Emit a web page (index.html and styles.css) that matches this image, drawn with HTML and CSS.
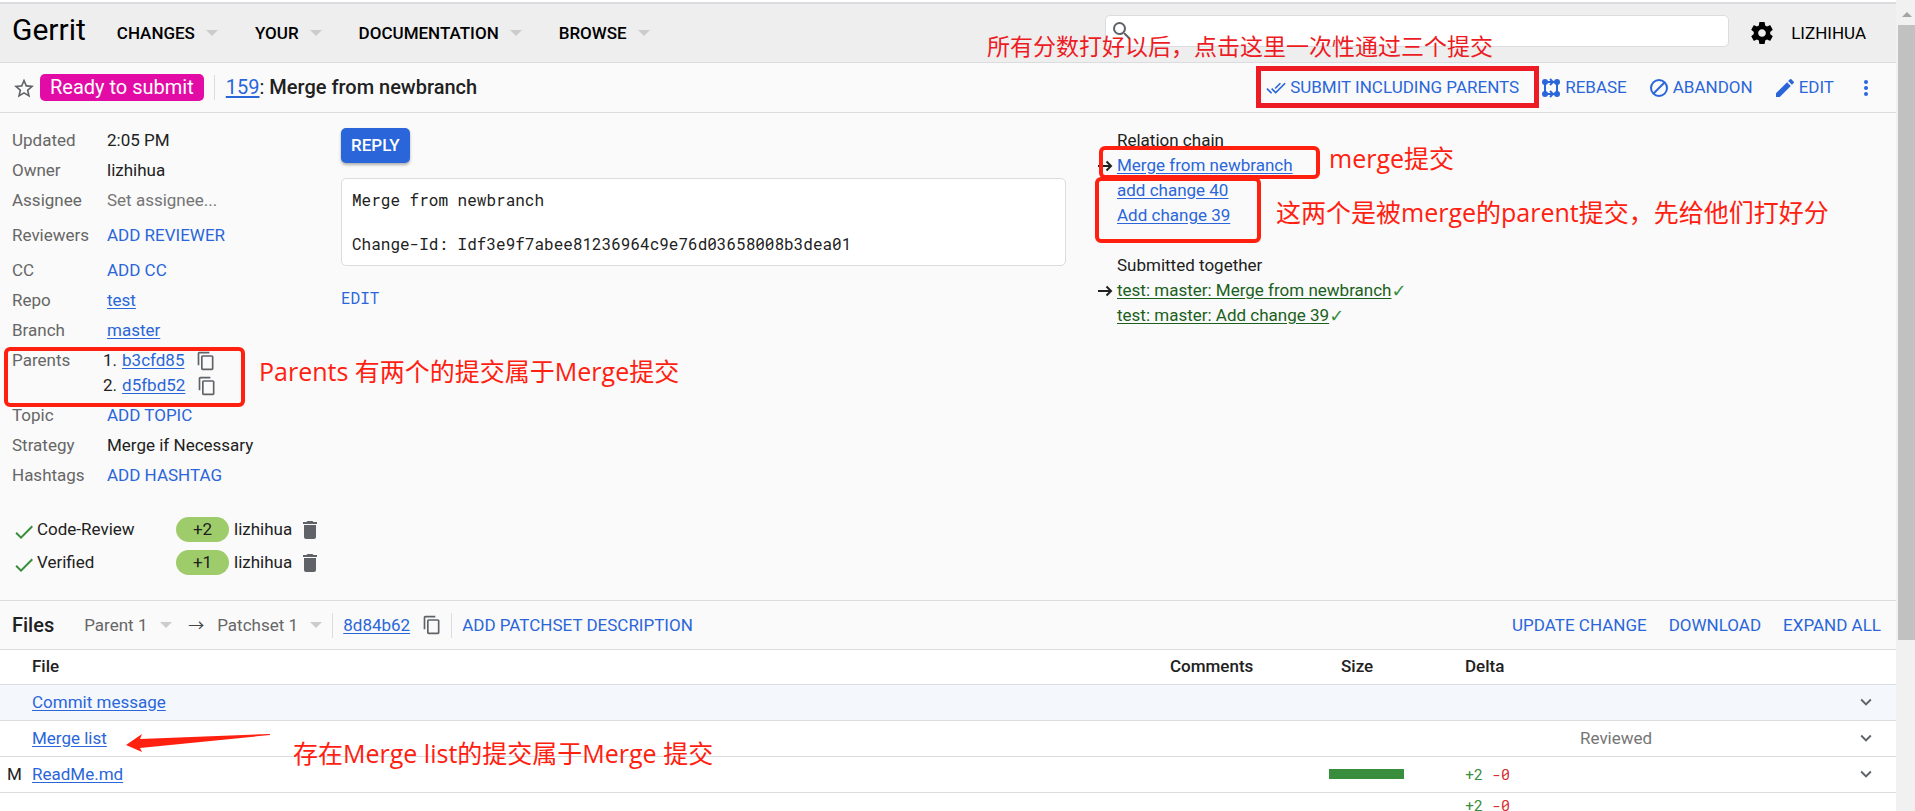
FILE: index.html
```
<!DOCTYPE html>
<html lang="en">
<head>
<meta charset="utf-8">
<title>159: Merge from newbranch · Gerrit</title>
<link rel="stylesheet" href="styles.css">
</head>
<body>
<svg class="sprite" aria-hidden="true">
  <symbol id="copy" viewBox="0 0 24 24"><path d="M16 1H4c-1.100 0-2 .9-2 2v14h2V3h12V1zm3 4H8c-1.100 0-2 .9-2 2v14c0 1.100.9 2 2 2h11c1.100 0 2-.9 2-2V7c0-1.100-.9-2-2-2zm0 16H8V7h11v14z"/></symbol>
  <symbol id="trash" viewBox="0 0 24 24"><path d="M6 19c0 1.100.9 2 2 2h8c1.100 0 2-.9 2-2V7H6v12zM19 4h-3.500l-1-1h-5l-1 1H5v2h14V4z"/></symbol>
  <symbol id="check" viewBox="0 0 24 24"><path d="M9 16.170L4.830 12l-1.420 1.410L9 19 21 7l-1.410-1.410z"/></symbol>
  <symbol id="chevron" viewBox="0 0 24 24"><path d="M7.410 8.590L12 13.170l4.590-4.580L18 10l-6 6-6-6z"/></symbol>
  <symbol id="caret" viewBox="0 0 12 6"><path d="M0 0h12L6 6z"/></symbol>
  <symbol id="arrow" viewBox="0 0 16 12"><path d="M1 6h13M9.500 1.500L14 6l-4.500 4.500" fill="none" stroke="currentColor" stroke-width="2"/></symbol>
</svg>
<div class="window">
<div class="page">
  <header class="topbar">
    <a class="brand" href="#">Gerrit</a>
    <nav class="menus">
      <button class="menu">CHANGES<svg class="caret"><use href="#caret"/></svg></button>
      <button class="menu">YOUR<svg class="caret"><use href="#caret"/></svg></button>
      <button class="menu">DOCUMENTATION<svg class="caret"><use href="#caret"/></svg></button>
      <button class="menu">BROWSE<svg class="caret"><use href="#caret"/></svg></button>
    </nav>
    <div class="search">
      <svg class="search-icon" viewBox="0 0 24 24"><path d="M15.500 14h-.79l-.28-.27A6.470 6.470 0 0 0 16 9.500 6.500 6.500 0 1 0 9.500 16c1.610 0 3.090-.59 4.230-1.570l.27.28v.79l5 4.990L20.490 19l-4.990-5zm-6 0C7.010 14 5 11.990 5 9.500S7.010 5 9.500 5 14 7.010 14 9.500 11.990 14 9.500 14z"/></svg>
      <input type="text" aria-label="Search">
    </div>
    <button class="gear" aria-label="Settings"><svg viewBox="2 2 20 20"><path d="M19.430 12.980c.04-.32.070-.64.070-.98s-.03-.66-.07-.98l2.110-1.650c.19-.15.240-.42.120-.64l-2-3.460c-.12-.22-.39-.3-.61-.22l-2.490 1c-.52-.4-1.080-.73-1.690-.98l-.38-2.650A.488.488 0 0 0 14 2h-4c-.25 0-.46.180-.49.420l-.38 2.650c-.61.250-1.170.59-1.690.98l-2.490-1c-.23-.09-.49 0-.61.220l-2 3.460c-.13.220-.07.490.120.640l2.110 1.650c-.04.320-.07.650-.07.980s.03.660.070.980l-2.110 1.650c-.19.150-.24.420-.12.640l2 3.460c.12.220.390.300.610.220l2.490-1c.52.400 1.080.730 1.690.980l.38 2.650c.03.240.240.420.490.420h4c.25 0 .46-.18.490-.42l.38-2.650c.61-.25 1.170-.59 1.690-.98l2.490 1c.23.090.490 0 .610-.22l2-3.460c.12-.22.070-.49-.12-.64l-2.110-1.650zM12 15.500c-1.930 0-3.500-1.570-3.500-3.500s1.570-3.500 3.500-3.500 3.500 1.570 3.500 3.500-1.570 3.500-3.500 3.500z"/></svg></button>
    <a class="account" href="#">LIZHIHUA</a>
    <p class="note note-submit">所有分数打好以后，点击这里一次性通过三个提交</p>
  </header>

  <section class="titlebar">
    <button class="star" aria-label="Star change"><svg viewBox="2 2 20 19"><path d="M22 9.240l-7.190-.62L12 2 9.190 8.630 2 9.240l5.460 4.730L5.820 21 12 17.270 18.180 21l-1.630-7.030L22 9.240zM12 15.400l-3.760 2.270 1-4.280-3.320-2.880 4.380-.38L12 6.100l1.710 4.040 4.380.38-3.320 2.880 1 4.280L12 15.400z"/></svg></button>
    <span class="status">Ready to submit</span>
    <h1 class="subject"><a href="#">159</a>: <b>Merge from newbranch</b></h1>
    <div class="actions">
      <button class="action submit"><svg viewBox="0 0 24 24"><path d="M18 7l-1.410-1.410-6.340 6.340 1.410 1.410L18 7zm4.240-1.410L11.660 16.170 7.480 12l-1.410 1.410L11.660 19l12-12-1.420-1.410zM.41 13.410L6 19l1.410-1.410L1.830 12 .41 13.410z"/></svg>SUBMIT INCLUDING PARENTS</button>
      <button class="action"><svg viewBox="0 0 20 20"><g fill="none" stroke="currentColor" stroke-width="2"><path d="M4 4v12M16 4v12M4 4h7M4 16h7M9 1l3 3-3 3M9 13l3 3-3 3M12 4h4M12 16h4"/></g><circle cx="4" cy="4" r="3"/><circle cx="16" cy="4" r="3"/><circle cx="4" cy="16" r="3"/><circle cx="16" cy="16" r="3"/></svg>REBASE</button>
      <button class="action"><svg viewBox="0 0 20 20"><g fill="none" stroke="currentColor" stroke-width="2"><circle cx="10" cy="10" r="8"/><path d="M4.500 15.500l11-11"/></g></svg>ABANDON</button>
      <button class="action"><svg viewBox="2 2 20 20"><path d="M3 17.250V21h3.750L17.810 9.940l-3.750-3.750L3 17.250zM20.710 7.040a.996.996 0 0 0 0-1.410l-2.340-2.340a.996.996 0 0 0-1.410 0l-1.830 1.830 3.750 3.750 1.830-1.830z"/></svg>EDIT</button>
      <button class="action more" aria-label="More actions"><svg viewBox="0 0 20 20"><circle cx="10" cy="4" r="2"/><circle cx="10" cy="10" r="2"/><circle cx="10" cy="16" r="2"/></svg></button>
    </div>
  </section>

  <main class="info">
    <section class="meta">
      <dl class="fields">
        <dt>Updated</dt><dd>2:05 PM</dd>
        <dt>Owner</dt><dd>lizhihua</dd>
        <dt>Assignee</dt><dd class="muted">Set assignee...</dd>
        <dt class="roomy">Reviewers</dt><dd class="roomy"><button class="link">ADD REVIEWER</button></dd>
        <dt>CC</dt><dd><button class="link">ADD CC</button></dd>
        <dt>Repo</dt><dd><a href="#">test</a></dd>
        <dt>Branch</dt><dd><a href="#">master</a></dd>
        <dt class="parents-label">Parents</dt>
        <dd><ol class="parents">
          <li><a href="#">b3cfd85</a><button class="icon" aria-label="Copy b3cfd85"><svg><use href="#copy"/></svg></button></li>
          <li><a href="#">d5fbd52</a><button class="icon" aria-label="Copy d5fbd52"><svg><use href="#copy"/></svg></button></li>
        </ol></dd>
        <dt>Topic</dt><dd><button class="link">ADD TOPIC</button></dd>
        <dt>Strategy</dt><dd>Merge if Necessary</dd>
        <dt>Hashtags</dt><dd><button class="link">ADD HASHTAG</button></dd>
      </dl>
      <ul class="scores">
        <li><svg class="ok"><use href="#check"/></svg><span class="score-name">Code-Review</span><span class="pill">+2</span>lizhihua<button class="icon" aria-label="Delete vote"><svg><use href="#trash"/></svg></button></li>
        <li><svg class="ok"><use href="#check"/></svg><span class="score-name">Verified</span><span class="pill">+1</span>lizhihua<button class="icon" aria-label="Delete vote"><svg><use href="#trash"/></svg></button></li>
      </ul>
      <div class="frame frame-parents"></div>
      <p class="note note-parents">Parents 有两个的提交属于Merge提交</p>
    </section>

    <section class="commit">
      <button class="reply">REPLY</button>
      <pre class="message">Merge from newbranch

Change-Id: Idf3e9f7abee81236964c9e76d03658008b3dea01</pre>
      <button class="link mono">EDIT</button>
    </section>

    <section class="related">
      <h2>Relation chain</h2>
      <ul>
        <li class="current"><svg class="here"><use href="#arrow"/></svg><a href="#">Merge from newbranch</a></li>
        <li><a href="#">add change 40</a></li>
        <li><a href="#">Add change 39</a></li>
      </ul>
      <h2>Submitted together</h2>
      <ul class="together">
        <li class="current"><svg class="here"><use href="#arrow"/></svg><a href="#">test: master: Merge from newbranch</a><span class="tick">✓</span></li>
        <li><a href="#">test: master: Add change 39</a><span class="tick">✓</span></li>
      </ul>
      <div class="frame frame-merge"></div>
      <div class="frame frame-changes"></div>
      <p class="note note-merge">merge提交</p>
      <p class="note note-changes">这两个是被merge的parent提交，先给他们打好分</p>
    </section>
  </main>

  <section class="filesbar">
    <h2>Files</h2>
    <label class="pick"><select aria-label="Base"><option>Parent 1</option></select><svg class="caret"><use href="#caret"/></svg></label>
    <span class="to">→</span>
    <label class="pick"><select aria-label="Patchset"><option>Patchset 1</option></select><svg class="caret"><use href="#caret"/></svg></label>
    <div class="sha"><a href="#">8d84b62</a><button class="icon" aria-label="Copy 8d84b62"><svg><use href="#copy"/></svg></button></div>
    <button class="link">ADD PATCHSET DESCRIPTION</button>
    <div class="filetools">
      <button class="link">UPDATE CHANGE</button>
      <button class="link">DOWNLOAD</button>
      <button class="link">EXPAND ALL</button>
    </div>
  </section>

  <section class="files">
    <table>
      <colgroup><col class="c-status"><col><col class="c-comments"><col class="c-size"><col class="c-delta"><col class="c-reviewed"><col class="c-expand"></colgroup>
      <thead><tr><th></th><th>File</th><th>Comments</th><th class="size-head">Size</th><th>Delta</th><th></th><th></th></tr></thead>
      <tbody>
        <tr class="selected"><td></td><td><a href="#">Commit message</a></td><td></td><td></td><td></td><td></td><td><button class="icon" aria-label="Expand"><svg><use href="#chevron"/></svg></button></td></tr>
        <tr><td></td><td><a href="#">Merge list</a></td><td></td><td></td><td></td><td class="muted">Reviewed</td><td><button class="icon" aria-label="Expand"><svg><use href="#chevron"/></svg></button></td></tr>
        <tr><td>M</td><td><a href="#">ReadMe.md</a></td><td></td><td><div class="bar"></div></td><td class="delta"><span class="add">+2</span> <span class="del">-0</span></td><td></td><td><button class="icon" aria-label="Expand"><svg><use href="#chevron"/></svg></button></td></tr>
      </tbody>
      <tfoot><tr><td></td><td></td><td></td><td></td><td class="delta"><span class="add">+2</span> <span class="del">-0</span></td><td></td><td></td></tr></tfoot>
    </table>
    <svg class="pointer" viewBox="0 0 144 18"><path d="M0 11L16 0l-2 5L144 0v1L14 14l2 4z"/></svg>
    <p class="note note-list">存在Merge list的提交属于Merge 提交</p>
  </section>
</div>
<div class="scroll" aria-hidden="true"><svg viewBox="0 0 10 5"><path d="M0 5h10L5 0z"/></svg><div class="thumb"></div></div>
</div>
</body>
</html>
```
FILE: styles.css
```
* { box-sizing: border-box; }
html, body { height: 100%; }
body {
  margin: 0;
  overflow: hidden;
  background: #fff;
  color: #212121;
  font: 17px/25px Roboto, "Noto Sans CJK SC", sans-serif;
}
h1, h2, p, dl, dd, ul, ol, pre { margin: 0; padding: 0; }
ul { list-style: none; }
a { color: #2a66d9; text-underline-offset: 2px; }
button { margin: 0; padding: 0; border: 0; background: none; color: inherit; font: inherit; cursor: pointer; }
svg { display: block; flex: none; fill: currentColor; }
.sprite { position: absolute; width: 0; height: 0; }
.link { color: #2a66d9; }
.muted { color: #757575; }
.icon { color: #5f6368; }
.icon svg { width: 20px; height: 20px; }
.caret { width: 12px; height: 6px; color: #ccc; }

.window { display: flex; height: 100%; }
.page { flex: 1; min-width: 0; overflow: hidden; border-top: 2px solid #fff; }

.topbar {
  position: relative;
  display: flex;
  align-items: center;
  height: 61px;
  padding: 0 30px 0 12px;
  border-top: 2px solid #dadce0;
  border-bottom: 1px solid #dadce0;
  background: #eee;
  color: #000;
}
.brand { color: #000; font-size: 30px; line-height: 40px; padding-bottom: 6px; text-decoration: none; }
.menus { display: flex; gap: 37px; margin-left: 31px; }
.menu { display: flex; align-items: center; gap: 11px; font-weight: 500; }
.search {
  display: flex;
  align-items: center;
  width: 624px;
  height: 32px;
  margin: 0 20px 4px auto;
  padding-left: 4px;
  border: 1px solid #dadce0;
  border-radius: 5px;
  background: #fff;
}
.search-icon { width: 24px; height: 24px; color: #5f6368; }
.search input { flex: 1; min-width: 0; border: 0; outline: 0; background: none; font: inherit; }
.gear svg { width: 26px; height: 22px; }
.account { margin-left: 16px; color: #000; text-decoration: none; }

.titlebar {
  display: flex;
  align-items: center;
  height: 50px;
  padding: 0 20px 0 14px;
  border-bottom: 1px solid #dadce0;
  background: #fafafa;
}
.star { color: #5f6368; }
.star svg { width: 20px; height: 20px; }
.status { margin: 0 10px 0 6px; padding: 0 10px; border-radius: 5px; background: #e20ba5; color: #fff; font-size: 20px; line-height: 27px; }
.subject { padding-left: 11px; border-left: 1px solid #dadce0; font-size: 20px; line-height: 25px; font-weight: 400; }
.subject b { font-weight: 500; }
.actions { display: flex; gap: 22px; margin-left: auto; }
.action { position: relative; display: flex; align-items: center; gap: 4px; color: #2a66d9; }
.action svg { width: 20px; height: 20px; }
.submit::after { content: ""; position: absolute; inset: -9px -20px -8px -10px; border: 5px solid #ed1c24; }

.info {
  display: grid;
  grid-template-columns: 341px minmax(0, 725fr) minmax(0, 830fr);
  border-bottom: 1px solid #dadce0;
  background: #fafafa;
}
.meta { position: relative; padding: 12px 0 20px 12px; }
.fields { display: grid; grid-template-columns: 95px 1fr; }
.fields dt { padding: 3px 0 2px; color: #666; }
.fields dd { padding: 3px 0 2px; }
.fields .roomy { padding: 8px 0 7px; }
.parents { list-style: none; counter-reset: parent; margin-left: -4px; }
.parents li { display: flex; align-items: center; counter-increment: parent; }
.parents li::before { content: counter(parent) "."; margin-right: 5px; }
.parents .icon { margin-left: 12px; }
.scores { display: grid; gap: 8px; margin-top: 24px; padding: 3px 0 5px; }
.scores li { display: flex; align-items: center; height: 25px; }
.scores .ok { width: 24px; height: 24px; margin-top: 5px; color: #388e3c; }
.score-name { width: 140px; padding-left: 1px; }
.pill { width: 53px; margin-right: 5px; border-radius: 13px; background: #9fcc6b; text-align: center; }
.scores .icon { margin-left: 6px; }
.scores .icon svg { width: 24px; height: 24px; }

.commit { padding-top: 15px; }
.reply { display: block; padding: 5px 10px; border-radius: 5px; background: #2a66d9; color: #fff; font-weight: 500; box-shadow: 0 2px 3px rgba(0, 0, 0, .3); }
.message {
  margin: 15px 0 19px;
  padding: 10px;
  border: 1px solid #dadce0;
  border-radius: 5px;
  background: #fff;
  font: 16px/22px "Roboto Mono", "Liberation Mono", monospace;
}
.mono { font-family: "Roboto Mono", "Liberation Mono", monospace; font-size: 16px; }

.related { position: relative; padding: 15px 0 0 51px; }
.related h2 { font-size: 17px; font-weight: 400; line-height: 25px; }
.related ul { margin-bottom: 25px; }
.related li { position: relative; display: flex; }
.here { position: absolute; left: -20px; top: 7px; width: 16px; height: 12px; }
.together a { color: #1b6020; }
.tick { color: #388e3c; font-family: "DejaVu Sans", sans-serif; font-size: 18px; }

.filesbar { display: flex; align-items: center; height: 49px; padding: 0 15px 0 12px; border-bottom: 1px solid #dadce0; background: #fafafa; }
.filesbar h2 { font-size: 20px; font-weight: 500; margin-right: 30px; }
.pick { display: flex; align-items: center; gap: 12px; }
.pick select { appearance: none; padding: 0; border: 0; background: none; color: #666; font: inherit; }
.to { margin: 0 13px 0 16px; font-size: 16px; color: #444; }
.sha { display: flex; align-items: center; gap: 12px; margin: 0 10px; padding: 0 9px 0 10px; border: solid #dadce0; border-width: 0 1px; }
.filetools { display: flex; gap: 22px; margin-left: auto; }

.files { position: relative; }
.files table { width: 100%; table-layout: fixed; border-collapse: collapse; }
.files th, .files td { height: 36px; padding: 0; border-bottom: 1px solid #dadce0; text-align: left; font-weight: 400; }
.files th { height: 34px; font-weight: 500; }
.files .size-head { padding-left: 12px; }
.files td:first-child { padding-left: 7px; }
.files .icon svg { width: 24px; height: 24px; padding: 1px; }
.files .icon { display: block; margin-left: 4px; }
.files tfoot td { height: 25px; border: 0; line-height: 25px; }
.c-status { width: 32px; }
.c-comments { width: 159px; }
.c-size { width: 136px; }
.c-delta { width: 115px; }
.c-reviewed { width: 270px; }
.c-expand { width: 46px; }
.selected { background: #f4f8fd; }
.bar { width: 75px; height: 10px; background: #388e3c; }
.delta { font-family: "Roboto Mono", "Liberation Mono", monospace; font-size: 15px; }
.add { color: #388e3c; }
.del { color: #d32f2f; }

.note { position: absolute; color: #ff2010; font: 25px/32px "Open Sans", "Noto Sans CJK SC", sans-serif; white-space: nowrap; }
.note-submit { right: 403px; top: 26px; color: #ed1c24; font-size: 23px; }
.note-parents { left: 259px; top: 242px; }
.note-merge { left: 263px; top: 29px; }
.note-changes { left: 210px; top: 83px; }
.note-list { left: 293px; top: 87px; }
.frame { position: absolute; border: 4px solid #ff2010; border-radius: 6px; }
.frame-parents { left: 4px; top: 234px; width: 241px; height: 60px; }
.frame-merge { left: 33px; top: 33px; width: 221px; height: 33px; }
.frame-changes { left: 29px; top: 64px; width: 166px; height: 66px; }
.pointer { position: absolute; left: 126px; top: 84px; width: 144px; height: 18px; color: #ff2010; }

.scroll { flex: none; width: 19px; padding: 12px 0 0 2px; background: #f1f1f1; }
.scroll svg { width: 10px; height: 5px; margin: 0 auto 8px; color: #a3a3a3; }
.thumb { height: 77%; background: #c1c1c1; }
```
